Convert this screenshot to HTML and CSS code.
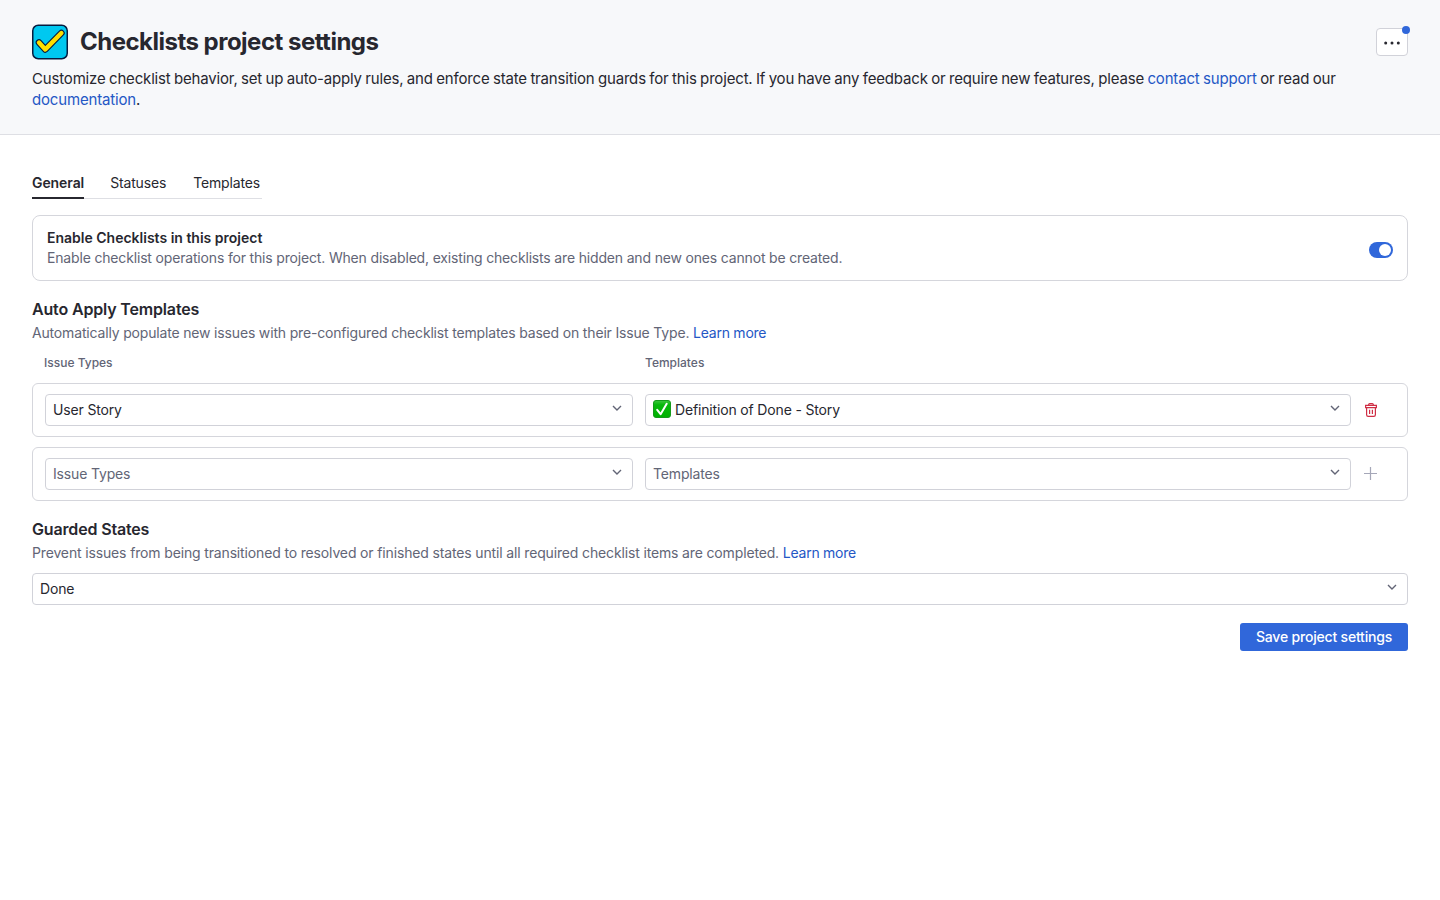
FILE: index.html
```html
<!DOCTYPE html>
<html lang="en">
<head>
    <meta charset="UTF-8">
    <meta name="viewport" content="width=device-width, initial-scale=1.0">
    <title>Checklists project settings</title>
    <link rel="stylesheet" href="styles.css">
</head>
<body>
    <header class="page-header">
        <div class="title-row">
            <svg class="logo" width="36" height="36" viewBox="0 0 36 36">
                <rect x="0.75" y="1.25" width="34.5" height="33.5" rx="5.5" fill="#00c8f0" stroke="#061c3f" stroke-width="1.5"/>
                <path d="M7 18.5l6.3 6.9L29.4 9" fill="none" stroke="#061c3f" stroke-width="6.6" stroke-linecap="round" stroke-linejoin="round"/>
                <path d="M7 18.5l6.3 6.9L29.4 9" fill="none" stroke="#ffdf00" stroke-width="4.4" stroke-linecap="round" stroke-linejoin="round"/>
            </svg>
            <h1>Checklists project settings</h1>
            <button class="more-button" aria-label="More actions">
                <svg width="16" height="4" viewBox="0 0 16 4" fill="#27272f"><circle cx="1.7" cy="2" r="1.5"/><circle cx="8" cy="2" r="1.5"/><circle cx="14.3" cy="2" r="1.5"/></svg>
                <span class="badge"></span>
            </button>
        </div>
        <p class="intro">Customize checklist behavior, set up auto-apply rules, and enforce state transition guards for this project. If you have any feedback or require new features, please <a href="#">contact support</a> or read our <br><a href="#">documentation</a>.</p>
    </header>

    <main class="content">
        <nav class="tabs">
            <a class="tab active" href="#">General</a>
            <a class="tab" href="#">Statuses</a>
            <a class="tab" href="#">Templates</a>
        </nav>

        <section class="card enable-card">
            <div>
                <h3>Enable Checklists in this project</h3>
                <p class="hint">Enable checklist operations for this project. When disabled, existing checklists are hidden and new ones cannot be created.</p>
            </div>
            <span class="toggle" role="switch" aria-checked="true"></span>
        </section>

        <section class="section">
            <h2>Auto Apply Templates</h2>
            <p class="hint">Automatically populate new issues with pre-configured checklist templates based on their Issue Type. <a href="#">Learn more</a></p>
            <div class="columns">
                <span>Issue Types</span>
                <span>Templates</span>
            </div>
            <div class="card rule">
                <div class="select">
                    <span>User Story</span>
                    <svg class="chevron" width="10" height="6" viewBox="0 0 10 6"><path d="M1 1l4 4 4-4"/></svg>
                </div>
                <div class="select">
                    <svg class="emoji" width="18" height="18" viewBox="0 0 18 18">
                        <defs><linearGradient id="green" x1="0" y1="0" x2="0" y2="1"><stop offset="0" stop-color="#3fc83f"/><stop offset="0.25" stop-color="#08b90d"/><stop offset="1" stop-color="#00b000"/></linearGradient></defs>
                        <rect x="0.5" y="0.5" width="17" height="17" rx="2.5" fill="url(#green)" stroke="#159a1b"/>
                        <path d="M4.2 9.8l3.4 4.4L13.7 3.8" fill="none" stroke="#fff" stroke-width="2" stroke-linecap="round" stroke-linejoin="round"/>
                    </svg>
                    <span>Definition of Done - Story</span>
                    <svg class="chevron" width="10" height="6" viewBox="0 0 10 6"><path d="M1 1l4 4 4-4"/></svg>
                </div>
                <button class="icon-button delete" aria-label="Delete rule">
                    <svg width="12" height="14" viewBox="0 0 12 14" fill="none" stroke="currentColor" stroke-width="1.2">
                        <path d="M3.7 2.3V1.6q0-1 1-1h2.6q1 0 1 1v.7M.6 2.3h10.8v2.3H.6zM1.6 4.6v7.2q0 1.6 1.6 1.6h5.6q1.6 0 1.6-1.6V4.6M4.6 6.8v4.2M7.4 6.8v4.2"/>
                    </svg>
                </button>
            </div>
            <div class="card rule">
                <div class="select placeholder">
                    <span>Issue Types</span>
                    <svg class="chevron" width="10" height="6" viewBox="0 0 10 6"><path d="M1 1l4 4 4-4"/></svg>
                </div>
                <div class="select placeholder">
                    <span>Templates</span>
                    <svg class="chevron" width="10" height="6" viewBox="0 0 10 6"><path d="M1 1l4 4 4-4"/></svg>
                </div>
                <button class="icon-button add" aria-label="Add rule">
                    <svg width="14" height="14" viewBox="0 0 14 14" fill="none" stroke="currentColor" stroke-width="1.2"><path d="M6.5 0v13M0 6.5h13"/></svg>
                </button>
            </div>
        </section>

        <section class="section guarded">
            <h2>Guarded States</h2>
            <p class="hint">Prevent issues from being transitioned to resolved or finished states until all required checklist items are completed. <a href="#">Learn more</a></p>
            <div class="select states">
                <span>Done</span>
                <svg class="chevron" width="10" height="6" viewBox="0 0 10 6"><path d="M1 1l4 4 4-4"/></svg>
            </div>
        </section>

        <div class="actions">
            <button class="save-button">Save project settings</button>
        </div>
    </main>
</body>
</html>
```
FILE: styles.css
```css
* {
    box-sizing: border-box;
}

body {
    margin: 0;
    font-family: Inter, 'Liberation Sans', sans-serif;
    font-size: 14px;
    line-height: 20px;
    letter-spacing: -0.16px;
    color: #27272f;
    background-color: #fff;
}

h1, h2, h3, p {
    margin: 0;
}

a {
    color: #2457c5;
    text-decoration: none;
}

button {
    font: inherit;
    letter-spacing: inherit;
    padding: 0;
    cursor: pointer;
}

.page-header {
    height: 135px;
    padding: 24px 32px;
    background-color: #f7f8fa;
    border-bottom: 1px solid #dedfe4;
}

.title-row {
    display: flex;
    align-items: center;
    height: 36px;
    margin-bottom: 8px;
}

.logo {
    margin-right: 12px;
}

h1 {
    font-size: 24px;
    line-height: 32px;
    font-weight: 700;
    letter-spacing: -0.51px;
}

.more-button {
    position: relative;
    display: flex;
    align-items: center;
    justify-content: center;
    width: 32px;
    height: 28px;
    margin-left: auto;
    padding-top: 2px;
    background-color: #fff;
    border: 1px solid #d1d2d9;
    border-radius: 4px;
}

.badge {
    position: absolute;
    top: -3px;
    right: -3px;
    width: 8px;
    height: 8px;
    border-radius: 50%;
    background-color: #3067da;
}

.intro {
    font-size: 15px;
    line-height: 21px;
    letter-spacing: -0.17px;
    word-spacing: -0.6px;
}

.content {
    padding: 33px 32px;
}

.tabs {
    display: flex;
    gap: 26px;
    width: 230px;
    height: 31px;
    border-bottom: 1px solid #dedfe4;
    margin-bottom: 16px;
}

.tab {
    height: 31px;
    padding-top: 5px;
    color: #27272f;
    white-space: nowrap;
}

.tab:last-child {
    margin-left: 1px;
}

.tab.active {
    font-weight: 600;
    letter-spacing: -0.08px;
    border-bottom: 2px solid #27272f;
}

.card {
    border: 1px solid #d5d6dc;
    border-radius: 6px;
}

.enable-card {
    display: flex;
    justify-content: space-between;
    align-items: center;
    height: 66px;
    padding: 0 14px;
    border-radius: 8px;
    margin-bottom: 16px;
}

.enable-card .toggle {
    margin-top: 4px;
}

h3 {
    font-size: 14px;
    font-weight: 600;
    letter-spacing: 0;
}

.hint {
    color: #626576;
    letter-spacing: -0.17px;
}

.guarded .hint {
    letter-spacing: -0.148px;
}

.hint a {
    letter-spacing: -0.25px;
}

.toggle {
    width: 24px;
    height: 16px;
    padding: 2px;
    border-radius: 8px;
    background-color: #3067da;
}

.toggle::after {
    content: "";
    display: block;
    width: 12px;
    height: 12px;
    margin-left: auto;
    border-radius: 50%;
    background-color: #fff;
}

.section {
    margin-bottom: 16px;
}

h2 {
    font-size: 16px;
    line-height: 24px;
    font-weight: 600;
    margin-bottom: 2px;
}

.columns {
    display: grid;
    grid-template-columns: 589px 1fr;
    gap: 12px;
    padding: 0 12px;
    margin: 10px 0;
    font-size: 12px;
    font-weight: 500;
    letter-spacing: 0;
    color: #626576;
}

.rule {
    display: grid;
    grid-template-columns: 588px 706px 16px;
    gap: 12px;
    align-items: center;
    height: 54px;
    padding: 0 12px;
    margin-bottom: 10px;
}

.select {
    display: flex;
    align-items: center;
    height: 32px;
    padding: 0 10px 0 7px;
    border: 1px solid #d1d2d9;
    border-radius: 4px;
}

.placeholder {
    color: #626576;
}

.emoji {
    margin: -2px 4px 0 0;
}

.chevron {
    margin: -4px 0 0 auto;
    fill: none;
    stroke: #626576;
    stroke-width: 1.4;
}

.icon-button {
    display: flex;
    justify-content: center;
    background: none;
    border: none;
}

.delete {
    color: #cf2e45;
}

.add {
    color: #a5a7b8;
}

.states {
    margin-top: 10px;
}

.actions {
    display: flex;
    justify-content: flex-end;
    margin-top: 18px;
}

.save-button {
    width: 168px;
    height: 28px;
    color: #fff;
    background-color: #3067da;
    border: none;
    border-radius: 3px;
    font-weight: 500;
    letter-spacing: -0.19px;
}
```
